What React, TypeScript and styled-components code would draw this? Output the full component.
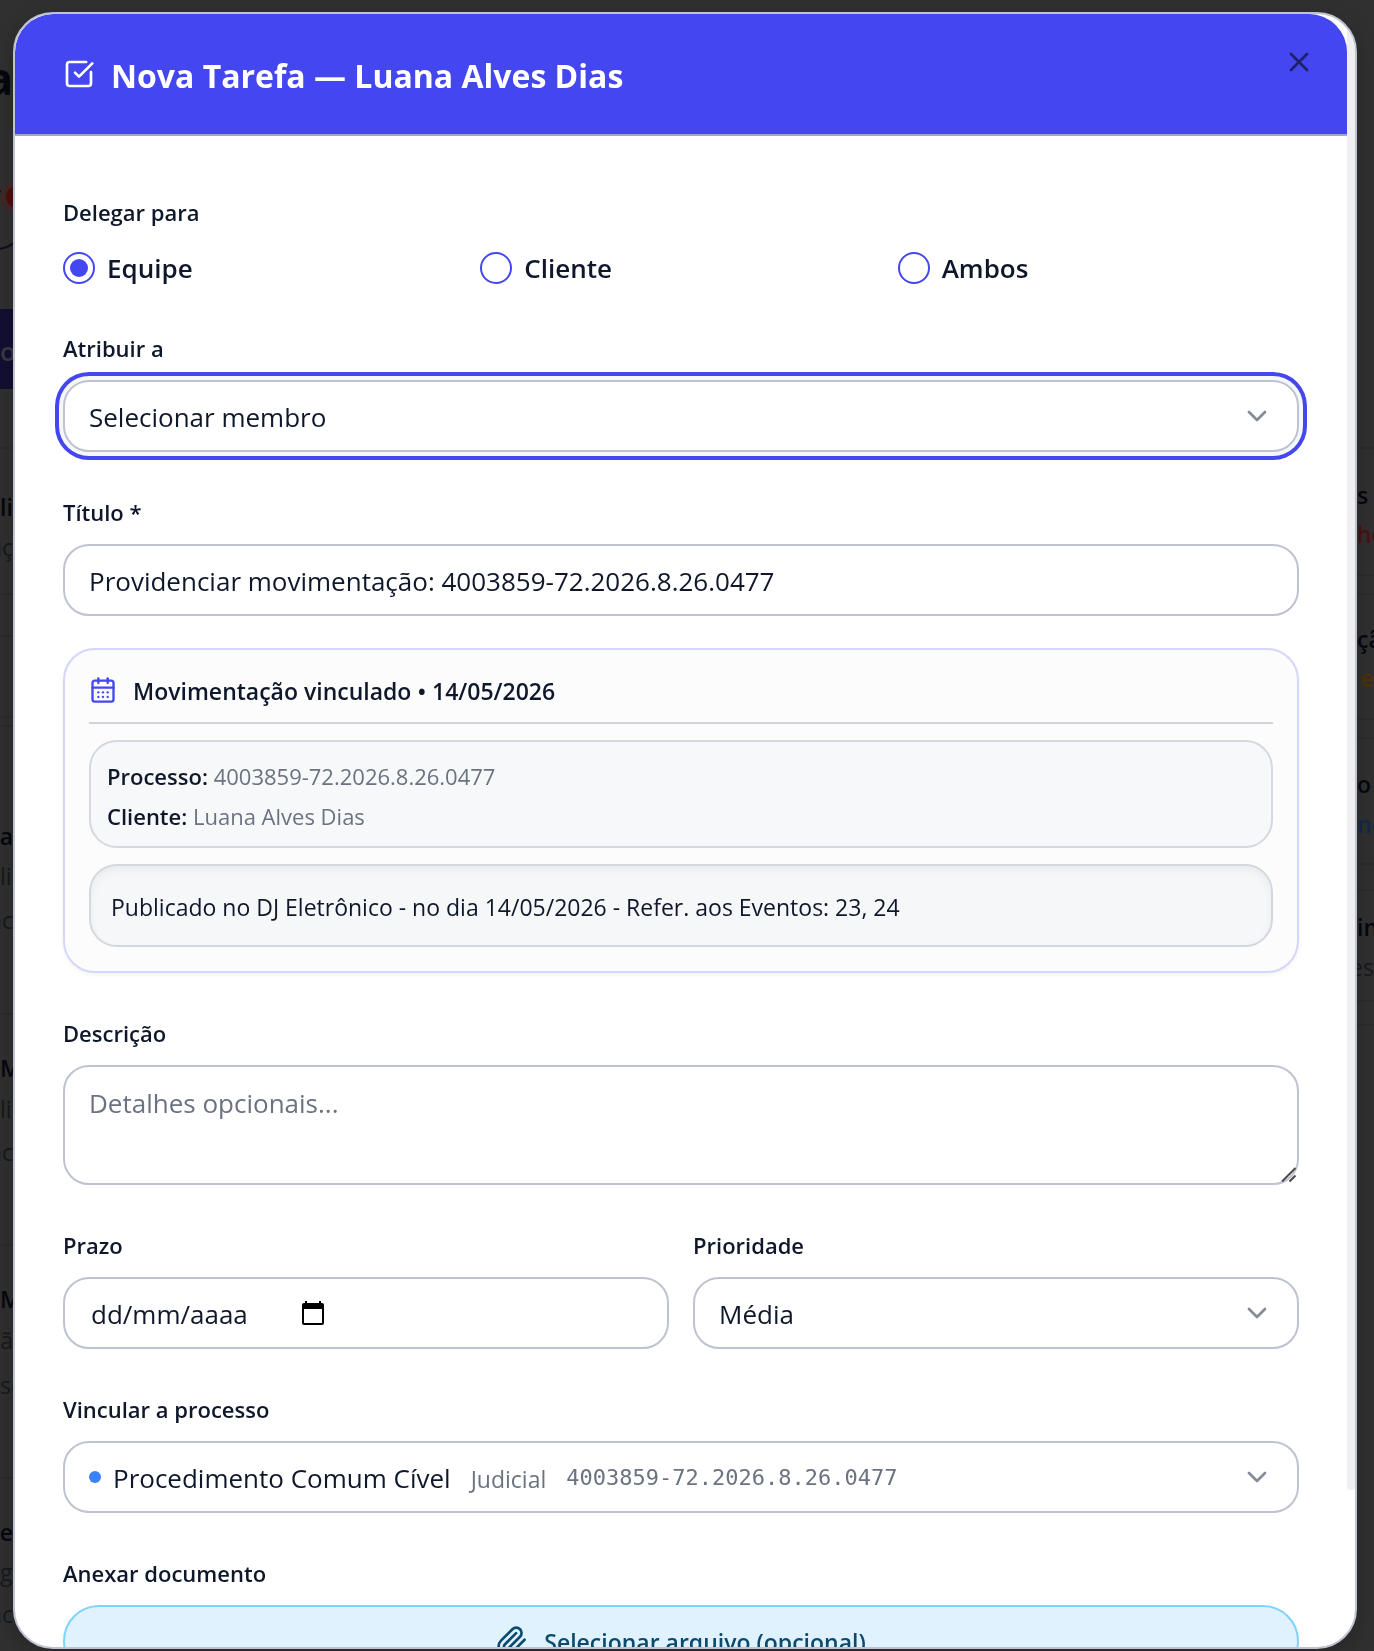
import { useState } from 'react';

import styled, { createGlobalStyle, css } from 'styled-components';
import { CalendarDays, ChevronDown, SquareCheckBig, X } from 'lucide-react';

type Tone = 'strong' | 'muted' | 'red' | 'amber' | 'blue' | 'title';

type BackdropItem = {
  gap: number;
  text?: string;
  tone?: Tone;
  end?: boolean;
}

// gap = space above the item; an item without text is a card edge
const pageTitle: BackdropItem[] = [
  { gap: 62, text: 'a', tone: 'title', end: true },
];

const leftItems: BackdropItem[] = [
  { gap: 58 },
  { gap: 42, text: 'liz', tone: 'strong' },
  { gap: 8, text: 'aç', tone: 'muted', end: true },
  { gap: 30 },
  { gap: 40 },
  { gap: 79 },
  { gap: 7 },
  { gap: 93, text: 'a', tone: 'strong' , end: true },
  { gap: 8, text: 'lin', tone: 'muted' },
  { gap: 12, text: 'ac', tone: 'muted', end: true },
  { gap: 77 },
  { gap: 37, text: 'M', tone: 'strong' },
  { gap: 9, text: 'lin', tone: 'muted' },
  { gap: 11, text: 'ac', tone: 'muted', end: true },
  { gap: 76 },
  { gap: 37, text: 'M', tone: 'strong' },
  { gap: 9, text: 'çã', tone: 'muted', end: true },
  { gap: 13, text: 'se', tone: 'muted' },
  { gap: 76 },
  { gap: 37, text: 'e', tone: 'strong', end: true },
  { gap: 8, text: 'g', tone: 'muted' },
  { gap: 10, text: 'ac', tone: 'muted', end: true },
];

const rightItems: BackdropItem[] = [
  { gap: 447 },
  { gap: 30, text: 's', tone: 'strong' },
  { gap: 7, text: 'ho', tone: 'red' },
  { gap: 24 },
  { gap: 17 },
  { gap: 28, text: 'çã', tone: 'strong' },
  { gap: 7, text: 'e', tone: 'amber', end: true },
  { gap: 24 },
  { gap: 17 },
  { gap: 29, text: 'o', tone: 'strong' },
  { gap: 8, text: 'ne', tone: 'blue' },
  { gap: 23 },
  { gap: 24 },
  { gap: 20, text: 'in', tone: 'strong' },
  { gap: 8, text: 'es', tone: 'muted', end: true },
  { gap: 17 },
  { gap: 22 },
];

const renderItems = (items: BackdropItem[]) =>
  items.map((item, i) =>
    item.text
      ? <Snippet key={i} $gap={item.gap} $tone={item.tone || 'muted'} $end={item.end}>{item.text}</Snippet>
      : <Edge key={i} $gap={item.gap} />
  );

const CalendarGlyph = () => (
  <svg width="24" height="26" viewBox="0 0 24 26" aria-hidden="true">
    <path
      fill="#000"
      fillRule="evenodd"
      d="M4 1h2v2h12V1h2v2h1a2 2 0 0 1 2 2v18a2 2 0 0 1-2 2H3a2 2 0 0 1-2-2V5a2 2 0 0 1 2-2h1V1Zm-1 8v14h18V9H3Z"
    />
  </svg>
);

const Paperclip = () => (
  <svg
    width="32"
    height="32"
    viewBox="0 0 24 24"
    fill="none"
    stroke="currentColor"
    strokeWidth="2"
    strokeLinecap="round"
    strokeLinejoin="round"
    aria-hidden="true"
  >
    <path d="m21.44 11.05-9.19 9.19a6 6 0 0 1-8.49-8.49l8.57-8.57A4 4 0 1 1 18 8.84l-8.59 8.57a2 2 0 0 1-2.83-2.83l8.49-8.48" />
  </svg>
);

const targets = ['Equipe', 'Cliente', 'Ambos'];

const App = () => {
  const [target, setTarget] = useState('Equipe');
  const [title, setTitle] = useState('Providenciar movimentação: 4003859-72.2026.8.26.0477');

  return (
    <Page>
      <GlobalStyle />
      <Backdrop aria-hidden="true">
        <Strip>
          {renderItems(pageTitle)}
          <Avatar />
          <Brand>or</Brand>
          {renderItems(leftItems)}
        </Strip>
        <Strip $right>{renderItems(rightItems)}</Strip>
      </Backdrop>

      <Overlay>
        <Modal role="dialog" aria-modal="true" aria-labelledby="modal-title">
          <Scroll>
            <Header>
              <SquareCheckBig size={32} />
              <Title id="modal-title">Nova Tarefa — Luana Alves Dias</Title>
              <Close type="button" aria-label="Fechar"><X size={32} /></Close>
            </Header>

            <Form onSubmit={(e) => e.preventDefault()}>
              <Group>
                <Legend>Delegar para</Legend>
                <Radios>
                  {targets.map((name) => (
                    <RadioLabel key={name}>
                      <Radio
                        type="radio"
                        name="target"
                        checked={target === name}
                        onChange={() => setTarget(name)}
                      />
                      {name}
                    </RadioLabel>
                  ))}
                </Radios>
              </Group>

              <Field>
                <Label htmlFor="member">Atribuir a</Label>
                <SelectBox $focused>
                  <Select id="member">
                    <option>Selecionar membro</option>
                  </Select>
                  <Chevron size={32} />
                </SelectBox>
              </Field>

              <Field>
                <Label htmlFor="title">Título *</Label>
                <Input id="title" value={title} onChange={(e) => setTitle(e.target.value)} />
              </Field>

              <Card>
                <CardHeader>
                  <CalendarDays size={28} color="#4446f0" />
                  <span>Movimentação vinculado • 14/05/2026</span>
                </CardHeader>
                <Details>
                  <div><strong>Processo:</strong> 4003859-72.2026.8.26.0477</div>
                  <div><strong>Cliente:</strong> Luana Alves Dias</div>
                </Details>
                <Notice>Publicado no DJ Eletrônico - no dia 14/05/2026 - Refer. aos Eventos: 23, 24</Notice>
              </Card>

              <Field>
                <Label htmlFor="description">Descrição</Label>
                <TextAreaBox>
                  <TextArea id="description" placeholder="Detalhes opcionais..." />
                  <Grip width="16" height="16" viewBox="0 0 16 16" aria-hidden="true">
                    <path d="M1 14.5 14.5 1M8.5 14.5l6-6" />
                  </Grip>
                </TextAreaBox>
              </Field>

              <Columns>
                <Field>
                  <Label htmlFor="due">Prazo</Label>
                  <DateBox>
                    <DateInput id="due" placeholder="dd/mm/aaaa" />
                    <DateButton type="button" aria-label="Abrir calendário"><CalendarGlyph /></DateButton>
                  </DateBox>
                </Field>
                <Field>
                  <Label htmlFor="priority">Prioridade</Label>
                  <SelectBox>
                    <Select id="priority">
                      <option>Média</option>
                    </Select>
                    <Chevron size={32} />
                  </SelectBox>
                </Field>
              </Columns>

              <Field>
                <Label htmlFor="process">Vincular a processo</Label>
                <SelectBox>
                  <ProcessValue>
                    <Dot />
                    <ProcessName>Procedimento Comum Cível</ProcessName>
                    <ProcessKind>Judicial</ProcessKind>
                    <ProcessNumber>4003859-72.2026.8.26.0477</ProcessNumber>
                  </ProcessValue>
                  <ClearSelect id="process">
                    <option>Procedimento Comum Cível</option>
                  </ClearSelect>
                  <Chevron size={32} />
                </SelectBox>
              </Field>

              <Field>
                <Label as="span">Anexar documento</Label>
                <Attach type="button">
                  <Paperclip />
                  <span>Selecionar arquivo (opcional)</span>
                </Attach>
              </Field>
            </Form>
          </Scroll>
          <Track><Thumb /></Track>
        </Modal>
      </Overlay>
    </Page>
  )
}

export default App;

const GlobalStyle = createGlobalStyle`
  *, *::before, *::after {
    box-sizing: border-box;
  }

  body {
    margin: 0;
    background: #303030;
    color: #0f172a;
    font-family: "Open Sans", "Noto Sans", sans-serif;
  }

  button, input, select, textarea {
    font: inherit;
    color: inherit;
  }
`;

const Page = styled.div`
  height: 100vh;
  overflow: hidden;
`;

const Backdrop = styled.div`
  display: flex;
  justify-content: space-between;
  height: 100%;
  overflow: hidden;
`;

const Strip = styled.div<{ $right?: boolean }>`
  display: flex;
  flex-direction: column;
  width: ${(props) => (props.$right ? 17 : 13)}px;
  overflow: hidden;
`;

const tones: Record<Tone, string> = {
  title: '#05080f',
  strong: '#05080f',
  muted: '#17191d',
  red: '#4a1213',
  amber: '#4f3206',
  blue: '#14294d',
};

const Snippet = styled.div<{ $gap: number; $tone: Tone; $end?: boolean }>`
  display: flex;
  flex-shrink: 0;
  justify-content: ${(props) => (props.$end ? 'flex-end' : 'flex-start')};
  height: 32px;
  margin-top: ${(props) => props.$gap}px;
  color: ${(props) => tones[props.$tone]};
  font-size: 23px;
  font-weight: ${(props) => (props.$tone === 'muted' ? 400 : 600)};
  line-height: 32px;
  white-space: nowrap;

  ${(props) => props.$tone === 'title' && css`
    font-size: 44px;
    font-weight: 700;
  `}
`;

const Edge = styled.div<{ $gap: number }>`
  flex-shrink: 0;
  height: 2px;
  margin-top: ${(props) => props.$gap}px;
  background: #2c2c2c;
`;

const Avatar = styled.div`
  position: relative;
  flex-shrink: 0;
  width: 60px;
  height: 60px;
  margin: 96px 0 0 -34px;
  border: 2px solid #0b101c;
  border-radius: 50%;

  /* unread badge */
  &::after {
    content: '';
    position: absolute;
    top: -12px;
    right: -10px;
    width: 34px;
    height: 34px;
    border: 6px solid #3d2a29;
    border-radius: 50%;
    background: #4f0d0a;
  }
`;

const Brand = styled.div`
  flex-shrink: 0;
  height: 80px;
  margin-top: 59px;
  background: #120f33;
  color: #3a3a44;
  font-size: 26px;
  font-weight: 600;
  line-height: 84px;
`;

const Overlay = styled.div`
  position: fixed;
  inset: 0;
  display: flex;
  padding: 12px 17px 2px 13px;
`;

const Modal = styled.div`
  display: flex;
  flex: 1;
  min-width: 0;
  overflow: hidden;
  border: 2px solid #bfc3d0;
  border-radius: 40px;
  background: #fff;
  box-shadow: 0 8px 24px rgba(0, 0, 0, 0.2);
`;

const Scroll = styled.div`
  flex: 1;
  min-width: 0;
  overflow-y: auto;
  scrollbar-width: none;
`;

const Track = styled.div`
  width: 8px;
`;

const Thumb = styled.div`
  height: 90.4%;
  border-radius: 4px;
  background: #efeff2;
`;

const Header = styled.header`
  position: relative;
  display: flex;
  align-items: center;
  gap: 16px;
  padding: 36px 48px;
  border-bottom: 2px solid #a0a2dc;
  border-radius: 38px 38px 0 0;
  background: #4446f0;
  color: #fff;
`;

const Title = styled.h2`
  margin: 0;
  padding-top: 4px;
  font-size: 32px;
  font-weight: 700;
  line-height: 44px;
`;

const Close = styled.button`
  position: absolute;
  top: 32px;
  right: 32px;
  display: flex;
  padding: 0;
  border: 0;
  background: none;
  color: #1d2168;
  cursor: pointer;
`;

const Form = styled.form`
  display: flex;
  flex-direction: column;
  gap: 32px;
  padding: 48px;
`;

const labelText = css`
  padding: 12px 0 0;
  font-size: 22px;
  font-weight: 600;
  line-height: 32px;
`;

const Group = styled.fieldset`
  margin: 0;
  padding: 0;
  border: 0;
`;

const Legend = styled.legend`
  ${labelText}
`;

const Field = styled.div`
  display: flex;
  flex-direction: column;
  gap: 16px;
  min-width: 0;
`;

const Label = styled.label`
  ${labelText}
`;

const Radios = styled.div`
  display: grid;
  grid-template-columns: repeat(3, 1fr);
  gap: 16px;
  padding: 24px 0 4px;
`;

const RadioLabel = styled.label`
  display: flex;
  align-items: center;
  gap: 12px;
  font-size: 26px;
  font-weight: 600;
  line-height: 32px;
`;

const Radio = styled.input`
  display: grid;
  place-content: center;
  width: 32px;
  height: 32px;
  margin: 0;
  border: 2px solid #4446f0;
  border-radius: 50%;
  appearance: none;

  &:checked::before {
    content: '';
    width: 18px;
    height: 18px;
    border-radius: 50%;
    background: #4446f0;
  }
`;

const control = css`
  width: 100%;
  height: 72px;
  border: 2px solid #bfc3d0;
  border-radius: 26px;
  background: #fff;
  font-size: 26px;
  line-height: 36px;
`;

const Input = styled.input`
  ${control}
  padding: 2px 24px 0;
`;

const TextAreaBox = styled.div`
  position: relative;
`;

const TextArea = styled.textarea`
  ${control}
  display: block;
  height: 120px;
  padding: 18px 24px;
  resize: vertical;

  &::placeholder {
    color: #6b7280;
  }

  &::-webkit-resizer {
    display: none;
  }
`;

const Grip = styled.svg`
  position: absolute;
  right: 2px;
  bottom: 2px;
  fill: none;
  stroke: #4b4b4b;
  stroke-width: 2;
  pointer-events: none;
`;

const SelectBox = styled.div<{ $focused?: boolean }>`
  ${control}
  display: grid;
  grid-template-columns: minmax(0, 1fr) 56px;
  align-items: center;
  ${(props) => props.$focused && 'box-shadow: 0 0 0 4px #f6f7f9, 0 0 0 8px #4446f0;'}
`;

const Select = styled.select`
  grid-area: 1 / 1 / 2 / 3;
  height: 68px;
  padding: 2px 56px 0 24px;
  border: 0;
  border-radius: 24px;
  outline: 0;
  background: transparent;
  appearance: none;
`;

const ClearSelect = styled(Select)`
  opacity: 0;
`;

const Chevron = styled(ChevronDown)`
  grid-area: 1 / 2;
  color: #858b97;
  pointer-events: none;
`;

const ProcessValue = styled.div`
  grid-area: 1 / 1;
  display: flex;
  align-items: center;
  padding-left: 24px;
  overflow: hidden;
  white-space: nowrap;
`;

const Dot = styled.span`
  flex-shrink: 0;
  width: 12px;
  height: 12px;
  margin-right: 12px;
  border-radius: 50%;
  background: #3b82f6;
`;

const ProcessName = styled.span`
  padding-top: 2px;
`;

const ProcessKind = styled.span`
  margin-left: 20px;
  padding-top: 4px;
  color: #6b7280;
  font-size: 23px;
`;

const ProcessNumber = styled.span`
  margin-left: 20px;
  padding-top: 2px;
  color: #6b7280;
  font-family: "DejaVu Sans Mono", "Liberation Mono", monospace;
  font-size: 22px;
`;

const DateBox = styled.div`
  ${control}
  display: flex;
  align-items: center;
  padding: 0 24px;
`;

const DateInput = styled.input`
  width: 212px;
  padding: 2px 2px 0;
  border: 0;
  outline: 0;
  background: transparent;

  &::placeholder {
    color: #0f172a;
    opacity: 1;
  }
`;

const DateButton = styled.button`
  display: flex;
  padding: 0;
  border: 0;
  background: none;
`;

const Card = styled.section`
  display: flex;
  flex-direction: column;
  gap: 16px;
  padding: 24px;
  border: 2px solid #d6d6fb;
  border-radius: 32px;
  background: #fcfcfd;
  box-shadow: 0 2px 4px rgba(0, 0, 0, 0.05);
`;

const CardHeader = styled.div`
  display: flex;
  align-items: center;
  gap: 16px;
  padding-bottom: 16px;
  border-bottom: 2px solid #d1d5db;
  font-size: 23px;
  font-weight: 600;
  line-height: 30px;

  span {
    padding-top: 2px;
  }
`;

const Details = styled.div`
  padding: 14px 16px 10px;
  border: 2px solid #d5d8e0;
  border-radius: 28px;
  background: #f7f8fa;
  color: #6b7280;
  font-size: 22px;
  line-height: 40px;

  strong {
    color: #0f172a;
    font-weight: 600;
  }
`;

const Notice = styled.div`
  padding: 22px 20px 18px;
  border: 2px solid #d3d8df;
  border-radius: 28px;
  background: #f6f7f9;
  box-shadow: inset 0 4px 8px rgba(0, 0, 0, 0.05);
  font-size: 23px;
  line-height: 39px;
`;

const Columns = styled.div`
  display: grid;
  grid-template-columns: repeat(2, minmax(0, 1fr));
  gap: 24px;
`;

const Attach = styled.button`
  display: flex;
  align-items: center;
  justify-content: center;
  gap: 16px;
  height: 72px;
  border: 2px solid #7dd3fc;
  border-radius: 36px;
  background: #dff2fe;
  color: #0c4a6e;
  font-size: 23px;
  font-weight: 600;
  cursor: pointer;

  span {
    padding-top: 2px;
  }
`;
